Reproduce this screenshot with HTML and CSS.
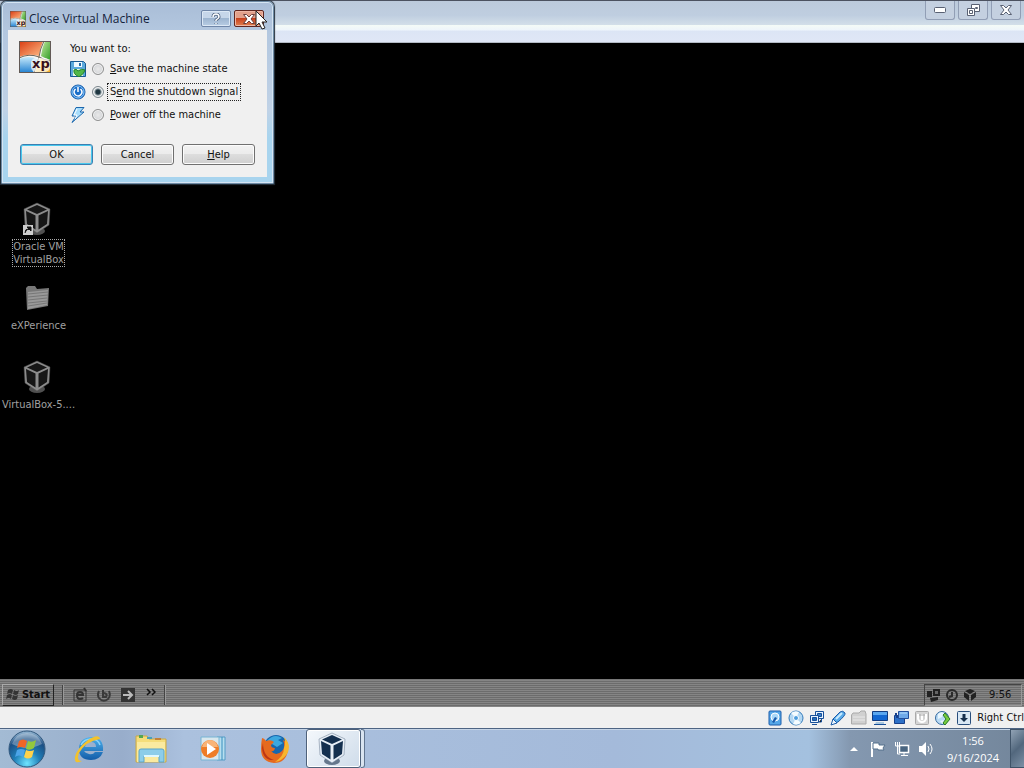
FILE: index.html
```html
<!DOCTYPE html>
<html lang="en">
<head>
<meta charset="utf-8">
<meta name="viewport" content="width=device-width, initial-scale=1">
<title>Close Virtual Machine</title>
<link rel="stylesheet" href="styles.css">
</head>
<body>
<svg class="defs" aria-hidden="true">
  <defs>
    <linearGradient id="sky" x1="0" y1="0" x2="0" y2="1"><stop offset="0" stop-color="#c5e9fb"/><stop offset="1" stop-color="#1f7fd0"/></linearGradient>
    <linearGradient id="warm" x1="0" y1="0" x2="1" y2="1"><stop offset="0" stop-color="#d93a10"/><stop offset="1" stop-color="#ffc08a"/></linearGradient>
    <linearGradient id="leaf" x1="0" y1="0" x2="1" y2="1"><stop offset="0" stop-color="#c4eaa0"/><stop offset="1" stop-color="#2c9a22"/></linearGradient>
    <linearGradient id="sun" x1="0" y1="0" x2="1" y2="1"><stop offset="0" stop-color="#fff3a0"/><stop offset="1" stop-color="#f3a821"/></linearGradient>
    <radialGradient id="orb" cx="50%" cy="90%" r="90%"><stop offset="0" stop-color="#6fe4ff"/><stop offset=".4" stop-color="#1f7fb8"/><stop offset=".75" stop-color="#1c4f84"/><stop offset="1" stop-color="#9fc0da"/></radialGradient>
    <linearGradient id="ie" x1="0" y1="0" x2="0" y2="1"><stop offset="0" stop-color="#4db2ee"/><stop offset="1" stop-color="#125ca8"/></linearGradient>
    <symbol id="xp" viewBox="0 0 32 32">
      <rect width="32" height="32" fill="#f6f7f4"/>
      <path d="M0 0h24q-3 7-4 15-10-3-20 1z" fill="url(#warm)"/>
      <path d="M26 0h6v19q-5-1-10-4 1-8 4-15z" fill="url(#leaf)"/>
      <path d="M0 18q9-4 19 0-4 8-5 14H0z" fill="url(#sky)"/>
      <path d="M21 17q6 3 11 3v12H16q2-8 5-15z" fill="url(#sun)"/>
      <path d="M0 17q10-5 20-1 5 3 12 4M25 0q-4 8-5 16-3 8-5 16" fill="none" stroke="#70675a"/>
      <rect x="12" y="17" width="19" height="14" rx="5" fill="#fff" opacity=".65"/>
      <text x="13" y="27" class="xp-text">xp</text>
      <rect x=".5" y=".5" width="31" height="31" fill="none" stroke="#625a56"/>
    </symbol>
    <symbol id="cube" viewBox="0 0 30 34">
      <ellipse cx="15" cy="29" rx="8" ry="4" class="cube-base"/>
      <path d="m15 1 13 6-1 16-12 8-12-8L2 7z" class="cube-edge"/>
      <path d="m15 3 10 4.500-10 4.500L5 7.500z" class="cube-face"/>
      <path d="m4 9 9.500 4.500v14L5 22zM26 9l-9.500 4.500v14L25 22z" class="cube-face"/>
    </symbol>
  </defs>
</svg>

<div class="screen">
  <header class="vm-top">
    <div class="vm-title">
      <button class="caption-btn" type="button" aria-label="Minimize"><svg width="12" height="6" viewBox="0 0 12 6"><rect x=".5" y=".5" width="11" height="5" rx="1" fill="#fff" stroke="#596173"/></svg></button>
      <button class="caption-btn" type="button" aria-label="Restore"><svg width="13" height="12" viewBox="0 0 13 12" fill="#fff" stroke="#596173"><path d="M4.500.5h8v7h-8z"/><path d="M8.500 3.500h2v1h-2z"/><path d="M.5 4.500h7v7h-7z"/><path d="M2.500 6.500h3v3h-3z"/></svg></button>
      <button class="caption-btn" type="button" aria-label="Close window"><svg width="12" height="10" viewBox="0 0 12 10"><path d="M.5.5h3L6 3 8.500.5h3L8 5l3.500 4.500h-3L6 7 3.500 9.500h-3L4 5z" fill="#fff" stroke="#596173"/></svg></button>
    </div>
    <div class="vm-menu"></div>
  </header>

  <main class="guest">
    <div class="desktop">
      <a class="shortcut" href="#">
        <span class="shortcut-pic"><svg class="cube-grey" width="30" height="34"><use href="#cube"/></svg><svg class="arrow" width="10" height="10" viewBox="0 0 10 10"><path d="M0 0h10v10H0z" fill="#ccc"/><path d="M2 8q0-4 3-4M4 2h4v4zM5 5l2-2" fill="#111" stroke="#111"/></svg></span>
        <span class="shortcut-name focused">Oracle VM<br>VirtualBox</span>
      </a>
      <a class="shortcut" href="#">
        <span class="shortcut-pic"><svg width="28" height="30" viewBox="0 0 28 30"><path d="M3 5 5 3h7l2 3 12-1-1 18-21 4z" fill="#777"/><path d="M5 9l20-2-1 15-19 4z" fill="#999"/><path d="M5 11 25 9M5 14l20-2M5 17l19-2M5 20l19-2M5 23l19-3" stroke="#777"/></svg></span>
        <span class="shortcut-name">eXPerience</span>
      </a>
      <a class="shortcut" href="#">
        <span class="shortcut-pic"><svg class="cube-grey" width="30" height="34"><use href="#cube"/></svg></span>
        <span class="shortcut-name">VirtualBox-5....</span>
      </a>
    </div>
    <div class="guest-bar">
      <button class="guest-start" type="button"><svg width="14" height="13" viewBox="0 0 14 13" fill="#353535"><path d="M2 2q3-2 5 0L6 6Q4 4 1 6zM8 2q3 2 5 0l-1 4q-2 2-5 0zM1 7q3-2 5 0l-1 4q-2-2-5 0zM7 7q2 2 5 0l-1 4q-2 2-5 0z"/></svg>Start</button>
      <span class="rule"></span>
      <div class="quick">
        <svg width="16" height="16" viewBox="0 0 16 16" fill="none" stroke="#333" stroke-width="2"><path d="M2 3h12v11H2z" stroke-width="1"/><path d="M5 8h6q0-3-3-3T5 8q0 4 3 4 2 0 3-1M12 1l2 3"/></svg>
        <svg width="16" height="16" viewBox="0 0 16 16" fill="none" stroke="#3a3a3a" stroke-width="2"><path d="M3 4q-2 4 0 7 4 5 9 1 3-3 1-8M7 3v7h3q2-3-2-4"/></svg>
        <svg width="16" height="16" viewBox="0 0 16 16"><path d="M1 1h14v14H1z" fill="#333"/><path d="M3 8h9M8 4l4 4-4 4" fill="none" stroke="#bbb" stroke-width="2"/></svg>
        <svg width="10" height="14" viewBox="0 0 10 14"><path d="m1 1 3 3-3 3M6 1l3 3-3 3" fill="none" stroke="#111" stroke-width="1.500"/></svg>
      </div>
      <span class="rule"></span>
      <div class="guest-tray">
        <svg width="14" height="14" viewBox="0 0 14 14" fill="#222"><path d="M0 3h5v6H0zM6 1h7v7H6zM3 10l8-1v3l-7 2z"/><path d="M8 3h3v3H8z" fill="#666"/></svg>
        <svg width="14" height="14" viewBox="0 0 14 14" fill="none" stroke="#2b2b2b" stroke-width="2"><circle cx="7" cy="7" r="5"/><path d="M7 4v4L4 9"/></svg>
        <svg width="14" height="14" viewBox="0 0 14 14" fill="#222"><path d="m7 1 5 2-5 3-5-3zM1 4l5 3v6L1 9zM13 4 8 7v6l5-4z"/></svg>
        <span>9:56</span>
      </div>
    </div>
  </main>

  <div class="status">
    <svg width="16" height="16" viewBox="0 0 16 16"><rect x="2" y="1" width="12" height="14" rx="1" fill="#56a8e8" stroke="#1a5cab"/><circle cx="8" cy="7" r="4" fill="#a9d8f8" stroke="#fff"/><path d="M5 12 8 7l2 1-3 5z" fill="#1a5cab"/></svg>
    <svg width="16" height="16" viewBox="0 0 16 16"><circle cx="8" cy="8" r="7" fill="#b4d8f3" stroke="#347bbb"/><path d="M8 8 3 3q4-3 8-1zM8 8l5 5q-4 3-8 1z" fill="#f5fcff"/><circle cx="8" cy="8" r="2.500" fill="#4d9ddd" stroke="#fff"/></svg>
    <svg width="16" height="16" viewBox="0 0 16 16" stroke="#174f99"><path d="M6.500 1.500h8v7h-8z" fill="#e8f4ff"/><path d="M8.500 3.500h4v3h-4z" fill="#3a81ca"/><path d="M1.500 5.500h8v7h-8z" fill="#e8f4ff"/><path d="M3.500 7.500h4v3h-4z" fill="#246bb8"/><path d="M3 14.500h5M12.500 9v3H10"/></svg>
    <svg width="16" height="16" viewBox="0 0 16 16"><path d="M3 9 10 2q3-2 5 1 1 2-7 9l-4 1z" fill="#5aabe8" stroke="#1b5ba8"/><path d="M6 9l6-6" stroke="#c9ebff" stroke-width="2"/><path d="m3 9 4 4-6 2z" fill="#eef8ff" stroke="#1b5ba8"/></svg>
    <svg width="16" height="16" viewBox="0 0 16 16"><path d="M.5 5 2 3h6l2-2h4l1 3v10H.5z" fill="#d0d0d0" stroke="#aaa"/><path d="M2 7h12M2 10h12" stroke="#e9e9e9"/></svg>
    <svg width="16" height="16" viewBox="0 0 16 16"><path d="M.5 1.500h15v9H.5z" fill="#1267d2" stroke="#123d82"/><path d="M1 2h14v3H1z" fill="#5aa7f0"/><path d="M4 12h8v2H3z" fill="#a9c7df"/><path d="M2 14.500h12" stroke="#174f99"/></svg>
    <svg width="16" height="16" viewBox="0 0 16 16"><path d="M1.500 5.500h10v8h-10z" fill="#2d70c7" stroke="#173f8a"/><path d="M5.500 1.500h10v7h-10z" fill="#6fa9e9" stroke="#234f9d"/><path d="M3 3v2M3 7h2" stroke="#173f8a" fill="none" stroke-width="2"/><path d="M7 3h7" stroke="#b8e0ff"/></svg>
    <svg width="16" height="16" viewBox="0 0 16 16"><rect x="1.500" y="1.500" width="13" height="13" rx="1" fill="#d5d5d5" stroke="#aaa"/><path d="M4 4v5q1 3 4 3t4-3V4M8 4v6" fill="none" stroke="#fff" stroke-width="2"/><path d="M5 5h6" stroke="#aaa"/></svg>
    <svg width="16" height="16" viewBox="0 0 16 16"><circle cx="7" cy="8" r="6.500" fill="#b9daf4" stroke="#34699f"/><path d="M3 4q3-3 6-1L7 7 3 9zM5 11l4-1-1 4z" fill="#e8f6ff"/><path d="m8 5 2-2 5 6-5 6-2-2 3-4z" fill="#77cb3e" stroke="#297b28"/></svg>
    <svg width="16" height="16" viewBox="0 0 16 16"><rect x="1.500" y="1.500" width="13" height="13" rx="1" fill="#d9e8f5" stroke="#294e7c"/><path d="M6.500 4h3v4H12l-4 4-4-4h2.500z" fill="#142e4c"/></svg>
    <span class="host-key">Right Ctrl</span>
  </div>

  <footer class="host-bar">
    <nav class="pins">
      <button class="start-orb" type="button" aria-label="Start menu"><svg width="38" height="38" viewBox="0 0 38 38"><circle cx="19" cy="19" r="18" fill="url(#orb)" stroke="#31587d"/><path d="M4 14Q8 3 19 3t15 11q-8 4-15 4T4 14z" fill="#fff" opacity=".3"/><path d="M11 11q4-3 8 0l-2 7q-4-2-8 0z" fill="#ef6526"/><path d="M20 11q4 2 8-1l-2 8q-4 3-8 1z" fill="#94c83d"/><path d="M9 20q4-2 8 0l-2 7q-4-3-8 0z" fill="#4ca4e8"/><path d="M18 20q4 2 8 0l-2 7q-4 3-8 0z" fill="#ffd24a"/></svg></button>
      <button class="pin" type="button" aria-label="Internet Explorer"><svg width="32" height="32" viewBox="0 0 32 32"><path d="M11 18h19Q31 4 18 4 6 5 6 16t12 11q9 0 12-8h-8q-2 3-6 2-4-1-5-3zm1-4q1-5 6-5t5 5z" fill="url(#ie)" fill-rule="evenodd"/><path d="M8 12q3-6 10-6 7 0 9 6" fill="none" stroke="#8ad4fa" stroke-width="1.500"/><path d="M27 6q-1-6-12 1Q4 15 2 24q-1 8 7 4-6 0-3-8Q13 8 27 6z" fill="#f3c22d"/></svg></button>
      <button class="pin" type="button" aria-label="Windows Explorer"><svg width="34" height="32" viewBox="0 0 34 32"><path d="M2 3h11l2 3h17v23H2z" fill="#f5dd7a" stroke="#c9a846"/><path d="M5 2h4v3H5z" fill="#54a652"/><path d="M13 4h5v2h-5z" fill="#4aa0b7"/><path d="M21 5h6v2h-6z" fill="#c4823a"/><path d="M3 9h28v20H3z" fill="#faeaa0"/><path d="M5 18q0-2 2-2h21q2 0 2 2v11h-5v-6H10v6H5z" fill="#8dcde9" stroke="#5aa4c8"/><path d="M10 23h15" stroke="#dff8ff" stroke-width="2"/></svg></button>
      <button class="pin" type="button" aria-label="Media Player"><svg width="28" height="28" viewBox="0 0 28 28"><path d="M18 2h8v23h-8z" fill="#b7dfef" stroke="#539bc5"/><path d="M23 2v23" stroke="#398dbd"/><path d="M2 2h18v23H2z" fill="#d9e7ed" stroke="#76b4d4"/><circle cx="11" cy="14" r="9" fill="#ee7d27"/><path d="M3 12q2-7 8-7t8 7z" fill="#f8b477"/><path d="m8 8 9 6-9 6z" fill="#fff"/></svg></button>
      <button class="pin" type="button" aria-label="Firefox"><svg width="32" height="32" viewBox="0 0 32 32"><circle cx="17" cy="14" r="12" fill="#1767ae"/><path d="M8 8q7-8 15-3l-4 2 5 3-6 4-5-3z" fill="#3ca8df"/><path d="M3 5q2 0 4 3 5-2 8 1l-3 3q0 3 4 3-1 4-4 3 5 6 11 0 4-4 1-11 6 3 5 10-2 13-14 13-13-1-13-14 0-6 1-11z" fill="#e66a1e"/><path d="M25 4q8 8 3 17-5 7-12 8 9-6 9-14 2-5 0-11z" fill="#f7b62d"/><path d="M4 10q0 14 11 17-11 1-12-12z" fill="#bd3616"/></svg></button>
      <button class="pin active" type="button" aria-label="VirtualBox"><svg class="cube-blue" width="30" height="34"><use href="#cube"/></svg></button>
      <span class="stack-edge"></span>
    </nav>
    <div class="host-tray">
      <svg width="8" height="4" viewBox="0 0 8 4"><path d="m4 0 4 4H0z" fill="#fff"/></svg>
      <svg width="16" height="16" viewBox="0 0 16 16"><path d="M2 1v15" stroke="#fff" stroke-width="2"/><path d="M3 2h6v2h6l-2 3 1 2H8V8H3z" fill="#fff" stroke="#55708c"/></svg>
      <svg width="16" height="16" viewBox="0 0 16 16" fill="none" stroke="#fff"><path d="M5.500 4.500h9v7h-9z" fill="#496581" stroke-width="1.500"/><path d="M7 14.500h7M10 12v2M1.500 1v4h4V1M3.500 1v12H6"/></svg>
      <svg width="16" height="16" viewBox="0 0 16 16"><path d="M1 5h3l4-4v14l-4-4H1z" fill="#fff"/><path d="M10 5q2 3 0 6M12 3q4 5 0 10" fill="none" stroke="#fff"/></svg>
      <time class="clock">1:56<br>9/16/2024</time>
      <button class="show-desktop" type="button" aria-label="Show desktop"></button>
    </div>
  </footer>

  <form class="dialog" role="dialog" aria-labelledby="dlg-title">
    <div class="dialog-head">
      <svg width="16" height="16"><use href="#xp"/></svg>
      <h1 class="dialog-title" id="dlg-title">Close Virtual Machine</h1>
      <button class="head-btn" type="button" aria-label="What's this"><svg width="12" height="12" viewBox="0 0 12 12" fill="none" stroke-linejoin="round"><path d="M3 4q0-3 3-3t3 3q0 1-3 3v1M6 10v1" stroke="#4c607d" stroke-width="3"/><path d="M3 4q0-3 3-3t3 3q0 1-3 3v1M6 10v1" stroke="#fff" stroke-width="1.500"/></svg></button>
      <button class="head-btn close" type="button" aria-label="Close"><svg width="12" height="10" viewBox="0 0 12 10"><path d="M.5.5h3L6 3 8.500.5h3L8 5l3.500 4.500h-3L6 7 3.500 9.500h-3L4 5z" fill="#fff" stroke="#6b3f3c"/></svg></button>
    </div>
    <div class="dialog-body">
      <div class="question">
        <svg width="32" height="32"><use href="#xp"/></svg>
        <fieldset class="choices">
          <legend>You want to:</legend>
          <div class="choice">
            <svg width="16" height="16" viewBox="0 0 16 16"><path d="M.5.5h13l2 2v13H.5z" fill="#5ba9dc" stroke="#175993"/><path d="M4 1h8v5H4z" fill="#eff9ff"/><path d="M9 2h2v3H9z" fill="#2469a4"/><path d="M3 8h10v7H3z" fill="#e3f5dd"/><path d="M4 9q2-2 4 1 4-3 7-1 0 3-6 7-6-3-5-7z" fill="#52b848" stroke="#218230"/></svg>
            <input type="radio" name="action" id="save"><label for="save"><u>S</u>ave the machine state</label>
          </div>
          <div class="choice">
            <svg width="16" height="16" viewBox="0 0 16 16"><circle cx="8" cy="8" r="7" fill="#1c6fc9" stroke="#145aa9"/><circle cx="8" cy="8" r="6" fill="none" stroke="#8bc9fa"/><path d="M5.500 5q-3 3 0 6 3 2 5 0 3-3 0-6M8 3v5" fill="none" stroke="#fff" stroke-width="1.500"/></svg>
            <input type="radio" name="action" id="signal" checked><label class="focused-label" for="signal">S<u>e</u>nd the shutdown signal</label>
          </div>
          <div class="choice">
            <svg width="16" height="16" viewBox="0 0 16 16"><path d="M6 .5h8L10 5h4L2 15.500 6 9H2z" fill="#a6dcfb" stroke="#1c67ad"/><path d="m7 2-3 6h3L5 12" fill="none" stroke="#fff"/></svg>
            <input type="radio" name="action" id="off"><label for="off"><u>P</u>ower off the machine</label>
          </div>
        </fieldset>
      </div>
      <div class="actions">
        <button class="push default" type="button">OK</button>
        <button class="push" type="button">Cancel</button>
        <button class="push" type="button"><span><u>H</u>elp</span></button>
      </div>
    </div>
  </form>
  <svg class="pointer" width="13" height="20" viewBox="0 0 13 20" aria-hidden="true"><path d="M1 1v15l3-3 3 6 3-1-3-6h5z" fill="#fff" stroke="#222"/></svg>
</div>
</body>
</html>
```

FILE: styles.css
```css
* { box-sizing: border-box; }
body {
  margin: 0;
  font: 11px/14px "DejaVu Sans Condensed", "DejaVu Sans", sans-serif;
  font-stretch: condensed;
  color: #111;
  background: #000;
}
button { font: inherit; color: inherit; padding: 0; margin: 0; border: 0; background: none; }
svg { display: block; flex: none; }
.defs { position: absolute; width: 0; height: 0; }
.xp-text { font: bold 13px "DejaVu Sans", sans-serif; fill: #38101c; }
.screen { position: relative; display: flex; flex-direction: column; min-height: 100vh; overflow: hidden; }

/* machine window */
.vm-top { border-top: 1px solid #4c5260; border-bottom: 1px solid #b3bac4; }
.vm-title {
  height: 24px; display: flex; justify-content: flex-end; gap: 3px; padding-right: 3px;
  background: linear-gradient(#bccadb, #bfcee0 60%, #d3dfe9);
}
.caption-btn {
  width: 30px; height: 19px; display: grid; place-items: center;
  border: 1px solid #919eb5; border-top: 0; border-radius: 0 0 3px 3px; background: #c4d0e0;
}
.vm-menu { height: 17px; background: linear-gradient(#f4fbf7, #eef5fb 30%, #dce5f5 35%, #e0e7f6); }

/* guest desktop */
.guest { flex: 1; display: flex; flex-direction: column; background: #000; }
.desktop { flex: 1; padding-top: 157px; }
.shortcut {
  width: 77px; height: 79px; display: flex; flex-direction: column; align-items: center; gap: 3px;
  color: #a0a0a0; text-decoration: none; line-height: 13px; white-space: nowrap;
}
.shortcut-pic { position: relative; height: 37px; display: grid; place-items: center; margin-right: 4px; }
.arrow { position: absolute; left: 1px; bottom: 2px; }
.shortcut-name { text-align: center; }
.focused { outline: 1px dotted #aaa; }
.cube-grey { --edge: #8c8c8c; --face: #161616; --base: #505050; }
.cube-blue { --edge: #e8eff7; --face: #15304f; --base: #65778c; }
.cube-edge { fill: var(--edge); stroke: var(--base); stroke-width: .5; }
.cube-face { fill: var(--face); }
.cube-base { fill: var(--base); }
.guest-bar {
  height: 28px; display: flex; align-items: center; gap: 8px; padding: 2px 2px 0;
  background: repeating-linear-gradient(#858585 0 1px, #6c6c6c 1px 2px);
  border-top: 1px solid #777;
}
.guest-start {
  height: 22px; width: 52px; display: flex; align-items: center; justify-content: center; gap: 2px;
  font-weight: bold; border: 1px solid; border-color: #aaa #222 #222 #aaa;
}
.rule { width: 2px; height: 20px; border-left: 1px solid #444; border-right: 1px solid #999; }
.quick { display: flex; align-items: center; gap: 8px; }
.quick svg:last-child { margin-left: 2px; }
.guest-tray {
  margin-left: auto; width: 98px; height: 22px; display: flex; align-items: center; gap: 4px; padding-left: 2px;
  border: 1px solid; border-color: #444 #999 #999 #444;
}
.guest-tray span { margin-left: 8px; }

/* machine status icons */
.status {
  height: 21px; display: flex; align-items: center; justify-content: flex-end; gap: 5px;
  padding: 1px 0 0; background: #f0f0f0;
}
.host-key { white-space: nowrap; }

/* host taskbar */
.host-bar {
  height: 40px; display: flex; justify-content: space-between;
  border-top: 1px solid #4d6483; box-shadow: inset 0 1px #c6d5e7;
  background: linear-gradient(90deg, #a3bbd4, #98adcb 12%, #abc1de 18%, #a4bada 60%, #a4c1df 79%, #8498b0 83%, #73869b);
}
.pins { display: flex; padding-left: 8px; }
.start-orb { width: 50px; }
.pin { width: 62px; display: grid; place-items: center; }
.active {
  width: 55px; border: 1px solid #4e617a; border-radius: 3px; padding-right: 4px;
  background: linear-gradient(135deg, #f4f8fc, #cfdcea); box-shadow: inset 0 0 0 1px #fff;
}
.stack-edge { width: 4px; border: 1px solid #61758f; border-left: 0; border-radius: 0 3px 3px 0; background: #d9e4f0; }
.host-tray { display: flex; align-items: center; gap: 8px; color: #fff; }
.host-tray svg:first-child { margin-right: 4px; }
.clock { width: 62px; text-align: center; font: 11px/17px "Open Sans", sans-serif; }
.show-desktop {
  width: 14px; align-self: stretch; border: 1px solid #3f5368; border-right: 0;
  background: linear-gradient(135deg, #91a3b5, #52677d 50%, #7c90a5);
}
.clock + .show-desktop { margin-left: -2px; }

/* close dialog */
.dialog {
  position: absolute; left: 1px; top: 1px; width: 273px; padding: 0 6px 6px;
  border: 1px solid #6e8ba5; border-radius: 6px 6px 0 0;
  background: linear-gradient(#a9bdd7, #b3c7df 16%, #c0d2e6 60%, #a8d4ee 75%, #a8d4ee);
  box-shadow: inset 0 0 0 1px #d5e5f3, 0 0 1px 1px #26323f;
}
.dialog-head { height: 28px; display: flex; align-items: center; gap: 3px; padding: 5px 3px 0 2px; }
.dialog-title { flex: 1; margin: 0; font: 12px/16px "Open Sans", sans-serif; color: #14233c; white-space: nowrap; }
.head-btn {
  width: 30px; height: 17px; display: grid; place-items: center; border: 1px solid #6f86a8; border-radius: 2px;
  background: linear-gradient(#c6d6e9 50%, #9db5d0 50%, #b8cde4); box-shadow: inset 0 0 0 1px #dce8f5;
}
.close { border-color: #5f2620; background: linear-gradient(#e2a08b 45%, #c7401d 50%, #e2814f); box-shadow: inset 0 0 0 1px #edb6a4; }
.dialog-body { background: #f0f0f0; padding: 11px 12px 12px; }
.question { display: flex; gap: 19px; margin-left: -1px; }
.choices { border: 0; margin: 0; padding: 0; min-width: 0; }
.choices legend { padding: 1px 0 0; margin-bottom: 3px; }
.choice { height: 23px; display: flex; align-items: center; padding-bottom: 3px; }
.choice input {
  appearance: none; width: 12px; height: 12px; margin: 0 4px 0 6px; border: 1px solid #8e8f8f; border-radius: 50%;
  background: radial-gradient(#e9e9e9, #c9ccd0); box-shadow: inset 0 0 0 1px #f4f4f4;
}
.choice input:checked { border-color: #7a858c; background: radial-gradient(#1d3540 0 2px, #d6dde0 4px); }
.choice label { padding: 1px 2px; white-space: nowrap; }
.choice .focused-label { outline: 1px dotted #222; }
.actions { display: flex; gap: 8px; margin-top: 16px; }
.push {
  flex: 1; height: 21px; display: grid; place-items: center; border: 1px solid #707070; border-radius: 3px;
  background: linear-gradient(#f2f2f2, #ebebeb 50%, #dddddd 50%, #cfcfcf); box-shadow: inset 0 0 0 1px #fcfcfc;
}
.default { border-color: #3c7fb1; box-shadow: inset 0 0 0 1px #48c8ee; }
.pointer { position: absolute; left: 255px; top: 10px; }
```
